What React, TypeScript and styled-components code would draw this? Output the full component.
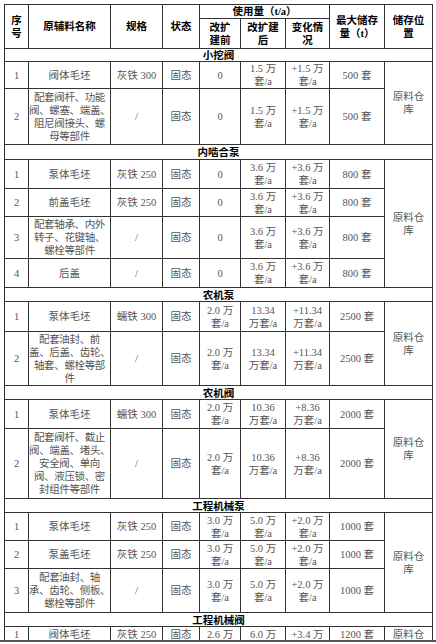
import React from "react";
import styled, { createGlobalStyle } from "styled-components";

const Global = createGlobalStyle`
  html, body { margin: 0; padding: 0; background: #fff; }
  body { font-family: "Liberation Serif", "Noto Sans CJK SC", serif; }
`;

const Page = styled.div`
  width: 436px;
  height: 642px;
  box-sizing: border-box;
  overflow: hidden;
  padding: 4px 0 0 4px;
  border-bottom: 2px solid #555;
`;

const Table = styled.table`
  border-collapse: collapse;
  table-layout: fixed;
  width: 428px;
  font-family: "Liberation Serif", "Noto Sans CJK SC", serif;
  font-size: 10.5px;
  line-height: 13px;
  color: #555;
`;

const Row = styled.tr<{ $h: number }>`
  height: ${(p) => p.$h}px;
`;

const Head = styled.th`
  border: 1px solid #333;
  padding: 0;
  text-align: center;
  vertical-align: middle;
  white-space: nowrap;
  font-weight: 700;
  color: #000;
  line-height: 13px;
`;

const Cell = styled.td<{ $tight?: boolean }>`
  border: 1px solid #333;
  padding: 0;
  text-align: center;
  vertical-align: middle;
  white-space: nowrap;
  overflow: visible;
  letter-spacing: ${(p) => (p.$tight ? "-0.35px" : "0")};
`;

const Section = styled.td`
  border: 1px solid #333;
  padding: 0;
  text-align: center;
  vertical-align: middle;
  font-weight: 700;
  color: #000;
  font-family: "Noto Sans CJK SC", sans-serif;
  font-size: 10.5px;
  line-height: 12px;
`;

type L = string | string[];
type DataRow = {
  no: string;
  name: L;
  spec: string;
  before: L;
  after: L;
  change: L;
  max: string;
  h: number;
};
type Group = { title: string; h: number; store: L; rows: DataRow[] };

const wan = (v: string): string[] => [`${v} 万`, "套/a"];
const wan2 = (v: string): string[] => [v, "万套/a"];

const groups: Group[] = [
  {
    title: "小挖阀",
    h: 13,
    store: ["原料仓", "库"],
    rows: [
      { no: "1", name: "阀体毛坯", spec: "灰铁 300", before: "0", after: wan("1.5"), change: wan("+1.5"), max: "500 套", h: 27 },
      {
        no: "2",
        name: ["配套阀杆、功能", "阀、螺塞、端盖、", "阻尼阀接头、螺", "母等部件"],
        spec: "/",
        before: "0",
        after: wan("1.5"),
        change: wan("+1.5"),
        max: "500 套",
        h: 56,
      },
    ],
  },
  {
    title: "内啮合泵",
    h: 15,
    store: ["原料仓", "库"],
    rows: [
      { no: "1", name: "泵体毛坯", spec: "灰铁 250", before: "0", after: wan("3.6"), change: wan("+3.6"), max: "800 套", h: 29 },
      { no: "2", name: "前盖毛坯", spec: "灰铁 250", before: "0", after: wan("3.6"), change: wan("+3.6"), max: "800 套", h: 28 },
      {
        no: "3",
        name: ["配套轴承、内外", "转子、花键轴、", "螺栓等部件"],
        spec: "/",
        before: "0",
        after: wan("3.6"),
        change: wan("+3.6"),
        max: "800 套",
        h: 42,
      },
      { no: "4", name: "后盖", spec: "/", before: "0", after: wan("3.6"), change: wan("+3.6"), max: "800 套", h: 29 },
    ],
  },
  {
    title: "农机泵",
    h: 14,
    store: ["原料仓", "库"],
    rows: [
      { no: "1", name: "泵体毛坯", spec: "蠕铁 300", before: wan("2.0"), after: wan2("13.34"), change: wan2("+11.34"), max: "2500 套", h: 30 },
      {
        no: "2",
        name: ["配套油封、前", "盖、后盖、齿轮、", "轴套、螺栓等部", "件"],
        spec: "/",
        before: wan("2.0"),
        after: wan2("13.34"),
        change: wan2("+11.34"),
        max: "2500 套",
        h: 54,
      },
    ],
  },
  {
    title: "农机阀",
    h: 14,
    store: ["原料仓", "库"],
    rows: [
      { no: "1", name: "泵体毛坯", spec: "蠕铁 300", before: wan("2.0"), after: wan2("10.36"), change: wan2("+8.36"), max: "2000 套", h: 29 },
      {
        no: "2",
        name: ["配套阀杆、截止", "阀、端盖、堵头、", "安全阀、单向", "阀、液压锁、密", "封组件等部件"],
        spec: "/",
        before: wan("2.0"),
        after: wan2("10.36"),
        change: wan2("+8.36"),
        max: "2000 套",
        h: 70,
      },
    ],
  },
  {
    title: "工程机械泵",
    h: 14,
    store: ["原料仓", "库"],
    rows: [
      { no: "1", name: "泵体毛坯", spec: "灰铁 250", before: wan("3.0"), after: wan("5.0"), change: wan("+2.0"), max: "1000 套", h: 28 },
      { no: "2", name: "泵盖毛坯", spec: "灰铁 250", before: wan("3.0"), after: wan("5.0"), change: wan("+2.0"), max: "1000 套", h: 28 },
      {
        no: "3",
        name: ["配套油封、轴", "承、齿轮、侧板、", "螺栓等部件"],
        spec: "/",
        before: wan("3.0"),
        after: wan("5.0"),
        change: wan("+2.0"),
        max: "1000 套",
        h: 44,
      },
    ],
  },
  {
    title: "工程机械阀",
    h: 14,
    store: "原料仓",
    rows: [
      { no: "1", name: "阀体毛坯", spec: "灰铁 250", before: "2.6 万", after: "6.0 万", change: "+3.4 万", max: "1200 套", h: 15 },
    ],
  },
];

const Lines: React.FC<{ v: L }> = ({ v }) => {
  const arr = Array.isArray(v) ? v : [v];
  return (
    <>
      {arr.map((s, i) => (
        <React.Fragment key={i}>
          {i > 0 && <br />}
          {s}
        </React.Fragment>
      ))}
    </>
  );
};

const widths = [24, 82, 52, 37, 41, 45, 44, 55, 48];

export default function App() {
  return (
    <>
      <Global />
      <Page>
        <Table>
          <colgroup>
            {widths.map((w, i) => (
              <col key={i} style={{ width: w }} />
            ))}
          </colgroup>
          <thead>
            <Row $h={14}>
              <Head rowSpan={2}>
                序<br />号
              </Head>
              <Head rowSpan={2}>原辅料名称</Head>
              <Head rowSpan={2}>规格</Head>
              <Head rowSpan={2}>状态</Head>
              <Head colSpan={3}>使用量（t/a）</Head>
              <Head rowSpan={2}>
                最大储存<br />量（t）
              </Head>
              <Head rowSpan={2}>
                储存位<br />置
              </Head>
            </Row>
            <Row $h={30}>
              <Head>
                改扩<br />建前
              </Head>
              <Head>
                改扩建<br />后
              </Head>
              <Head>
                变化情<br />况
              </Head>
            </Row>
          </thead>
          <tbody>
            {groups.map((g) => (
              <React.Fragment key={g.title}>
                <Row $h={g.h}>
                  <Section colSpan={9}>{g.title}</Section>
                </Row>
                {g.rows.map((r, i) => (
                  <Row $h={r.h} key={i}>
                    <Cell>{r.no}</Cell>
                    <Cell $tight={Array.isArray(r.name)}>
                      <Lines v={r.name} />
                    </Cell>
                    <Cell>{r.spec}</Cell>
                    <Cell>固态</Cell>
                    <Cell>
                      <Lines v={r.before} />
                    </Cell>
                    <Cell>
                      <Lines v={r.after} />
                    </Cell>
                    <Cell>
                      <Lines v={r.change} />
                    </Cell>
                    <Cell>{r.max}</Cell>
                    {i === 0 && (
                      <Cell rowSpan={g.rows.length}>
                        <Lines v={g.store} />
                      </Cell>
                    )}
                  </Row>
                ))}
              </React.Fragment>
            ))}
          </tbody>
        </Table>
      </Page>
    </>
  );
}
